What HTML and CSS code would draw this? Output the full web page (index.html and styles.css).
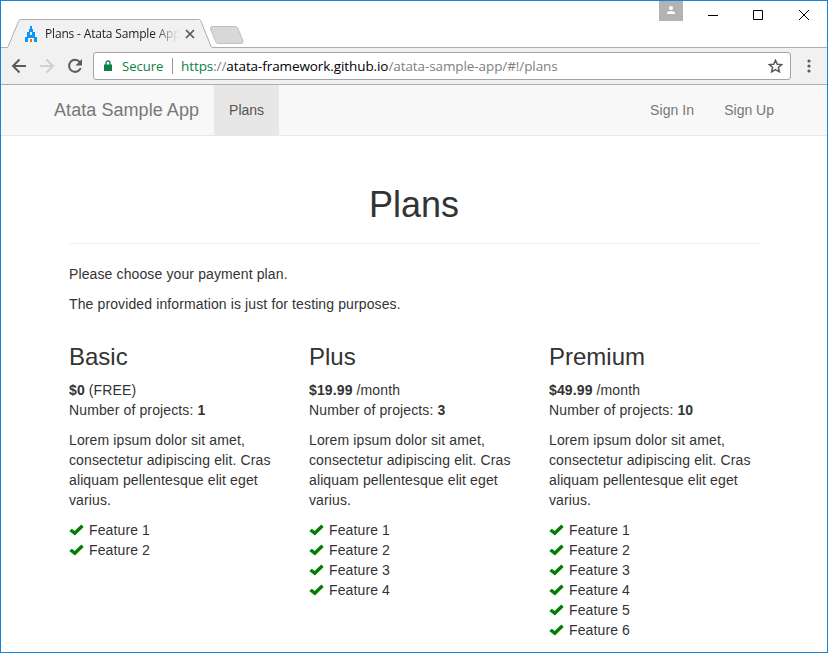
FILE: index.html
```html
<!DOCTYPE html>
<html lang="en">
<head>
<meta charset="utf-8">
<title>Plans - Atata Sample App</title>
<link rel="stylesheet" href="styles.css">
</head>
<body>
<svg width="0" height="0" class="defs"><defs>
<symbol id="ok" viewBox="0 0 15 12"><path d="M.3 7 2.800 4.700 5.600 6.900 12.300.6 14.700 2.900 5.900 11.500Z"/></symbol>
</defs></svg>
<div class="window">
  <header class="tabstrip">
    <div class="tab">
      <svg class="tab-shape" width="206" height="29" viewBox="0 0 206 29"><path d="M0 28.500C1.200 28.500 1.200 27 1.700 26L11.500 2.500C12 1 12.500 .5 14 .5H191.500C193 .5 193.500 1 194 2.500L203.500 26C204 27.500 204.500 28.500 206 28.500V29H0Z" fill="#f1f1f1"/><path d="M0 28.500C1.200 28.500 1.200 27 1.700 26L11.500 2.500C12 1 12.500 .5 14 .5H191.500C193 .5 193.500 1 194 2.500L203.500 26C204 27.500 204.500 28.500 206 28.500" fill="none" stroke="#b0adb0"/></svg>
      <svg class="favicon" width="12" height="16" viewBox="0 0 12 16" shape-rendering="crispEdges"><path fill="#0c96fb" fill-rule="evenodd" d="M5 0h2v3h1v3h2v5h2v5H9v-4H3v4H0v-5h2V6h2V3h1ZM5 6v3h2V6Z"/><path fill="#f36c21" d="M5 13h2v3H5Z"/></svg>
      <span class="tab-title">Plans - Atata Sample App</span>
      <svg class="tab-close" width="10" height="10" viewBox="0 0 10 10"><path d="M1 1 9 9M9 1 1 9" stroke="#555" stroke-width="1.700"/></svg>
    </div>
    <svg class="new-tab" width="36" height="19" viewBox="0 0 36 19"><path d="M3 .5H26Q28 .5 29 2.500L34 15Q34.500 17.500 32 17.500H9Q7.500 17.500 6.500 15.500L1.500 3Q1 .5 3 .5Z" fill="#d8d8d8" stroke="#c2c0c2"/></svg>
    <div class="controls">
      <svg class="user" width="24" height="20" viewBox="0 0 24 20"><path fill="#b3b3b3" d="M0 0h24v20H0Z"/><circle cx="12" cy="7" r="2.100" fill="#fff"/><path fill="#fff" d="M8 13v-1.500Q9 10 12 10t4 1.500V13Z"/></svg>
      <svg class="caps" width="104" height="12" viewBox="0 0 104 12" fill="none" stroke="#000"><path d="M0 6.500H10M45.500 1.500h9v9h-9ZM91 1l10 10M101 1 91 11"/></svg>
    </div>
  </header>
  <div class="toolbar">
    <svg class="nav-icons" width="76" height="18" viewBox="0 0 76 18" fill="none" stroke-width="2"><path stroke="#5a5a5a" d="M15 9H2M8.500 2.500 2 9l6.500 6.500"/><path stroke="#d0d0d0" d="M29 9H42M35.500 2.500 42 9l-6.500 6.500"/><path stroke="#5a5a5a" d="M68.700 5A6 6 0 1 0 69.700 11"/><path fill="#5a5a5a" d="M71 2v6.500h-6.500Z"/></svg>
    <div class="address">
      <svg class="lock" width="8" height="12" viewBox="0 0 8 12"><path d="M0 4.500h8V11H0Z" fill="#0b8043"/><path d="M2 5V3a2 2 0 0 1 4 0V5" fill="none" stroke="#0b8043" stroke-width="1.300"/></svg>
      <span class="secure">Secure</span><i class="divider"></i>
      <span class="url"><span class="scheme">https</span><span class="slashes">://</span><span class="host">atata-framework.github.io</span><span class="path">/atata-sample-app/#!/plans</span></span>
      <svg class="star" width="15" height="14" viewBox="0 0 15 14"><path d="M7.500 1.200 9.300 5.200 13.700 5.600 10.400 8.500 11.400 12.800 7.500 10.500 3.600 12.800 4.600 8.500 1.300 5.600 5.700 5.200Z" fill="none" stroke="#5a5a5a" stroke-width="1.500"/></svg>
    </div>
    <svg class="menu" width="4" height="14" viewBox="0 0 4 14" fill="#5a5a5a"><circle cx="2" cy="2" r="1.600"/><circle cx="2" cy="7" r="1.600"/><circle cx="2" cy="12" r="1.600"/></svg>
  </div>
  <nav class="navbar">
    <a class="brand">Atata Sample App</a><a class="link active">Plans</a>
    <a class="link right">Sign In</a><a class="link">Sign Up</a>
  </nav>
  <main>
    <h1>Plans</h1>
    <p>Please choose your payment plan.</p>
    <p>The provided information is just for testing purposes.</p>
    <div class="plans">
      <section>
        <h3>Basic</h3>
        <p><b>$0</b> (FREE)<br>Number of projects: <b>1</b></p>
        <p>Lorem ipsum dolor sit amet, consectetur adipiscing elit. Cras aliquam pellentesque elit eget varius.</p>
        <ul><li><svg><use href="#ok"/></svg>Feature 1</li><li><svg><use href="#ok"/></svg>Feature 2</li></ul>
      </section>
      <section>
        <h3>Plus</h3>
        <p><b>$19.99</b> /month<br>Number of projects: <b>3</b></p>
        <p>Lorem ipsum dolor sit amet, consectetur adipiscing elit. Cras aliquam pellentesque elit eget varius.</p>
        <ul><li><svg><use href="#ok"/></svg>Feature 1</li><li><svg><use href="#ok"/></svg>Feature 2</li><li><svg><use href="#ok"/></svg>Feature 3</li><li><svg><use href="#ok"/></svg>Feature 4</li></ul>
      </section>
      <section>
        <h3>Premium</h3>
        <p><b>$49.99</b> /month<br>Number of projects: <b>10</b></p>
        <p>Lorem ipsum dolor sit amet, consectetur adipiscing elit. Cras aliquam pellentesque elit eget varius.</p>
        <ul><li><svg><use href="#ok"/></svg>Feature 1</li><li><svg><use href="#ok"/></svg>Feature 2</li><li><svg><use href="#ok"/></svg>Feature 3</li><li><svg><use href="#ok"/></svg>Feature 4</li><li><svg><use href="#ok"/></svg>Feature 5</li><li><svg><use href="#ok"/></svg>Feature 6</li></ul>
      </section>
    </div>
  </main>
</div>
</body>
</html>
```
FILE: styles.css
```css
* { box-sizing: border-box; }
body { margin: 0; font: 14px/20px "Liberation Sans", Arial, sans-serif; color: #333; }
svg { display: block; flex: none; }
.defs { position: absolute; }
.window { width: 828px; height: 653px; border: 1px solid #1883d7; background: #fff; overflow: hidden; }
.tabstrip { height: 47px; display: flex; align-items: flex-start; border-bottom: 1px solid #b0adb0; }
.tab { position: relative; width: 206px; height: 29px; margin: 18px 0 0 6px; padding-left: 18px; display: flex; align-items: center; flex: none; }
.tab-shape { position: absolute; left: 0; top: 0; }
.favicon { position: relative; margin-top: 1px; }
.tab-title { position: relative; width: 136px; margin-left: 8px; white-space: nowrap; font: 12px/20px "Open Sans", sans-serif; letter-spacing: -0.17px; color: #222; -webkit-mask-image: linear-gradient(90deg, #000 108px, transparent 134px); mask-image: linear-gradient(90deg, #000 108px, transparent 134px); }
.tab-close { position: relative; margin-left: 4px; }
.new-tab { margin: 25px 0 0 -4px; }
.controls { display: flex; margin-left: auto; }
.caps { margin: 8px 15px 0 25px; }
.toolbar { height: 37px; display: flex; align-items: center; background: #f1f1f1; border-bottom: 1px solid #b0adb0; }
.nav-icons { margin-left: 10px; }
.address { width: 698px; height: 28px; margin-left: 6px; padding: 0 7px 0 10px; display: flex; align-items: center; background: #fff; border: 1px solid #a5a3a5; border-radius: 3px; font: 14px/20px "Open Sans", sans-serif; white-space: nowrap; }
.secure { margin-left: 10px; width: 42px; font-size: 13px; color: #0b8043; }
.divider { width: 1px; height: 16px; margin: 0 8px; background: #999; }
.url { font-size: 13.500px; letter-spacing: -0.09px; }
.scheme { color: #0b8043; }
.slashes, .path { color: #808080; }
.host { color: #000; }
.star { margin-left: auto; }
.menu { margin-left: 16px; }
.navbar { height: 51px; padding: 0 38px; display: flex; background: #f8f8f8; border-bottom: 1px solid #e7e7e7; color: #777; }
.brand { padding: 15px; font-size: 18px; letter-spacing: 0.06px; }
.link { padding: 15px; }
.active { background: #e7e7e7; color: #555; }
.right { margin-left: auto; letter-spacing: 0.08px; }
main { width: 690px; margin: 49px 0 0 68px; letter-spacing: 0.12px; }
h1 { margin: 0 0 20px; padding-bottom: 18px; border-bottom: 1px solid #eee; font-size: 36px; line-height: 40px; font-weight: 400; letter-spacing: 0; text-align: center; }
p { margin: 0 0 10px; }
.plans { display: grid; grid-template-columns: repeat(3, 210px); gap: 30px; margin-top: 30px; }
h3 { margin: 0 0 10px; font-size: 24px; line-height: 26px; font-weight: 400; letter-spacing: 0; }
ul { margin: 0; padding: 0; list-style: none; }
li { display: flex; align-items: center; height: 20px; }
li svg { width: 15px; height: 12px; margin-right: 5px; fill: #008000; }
```
